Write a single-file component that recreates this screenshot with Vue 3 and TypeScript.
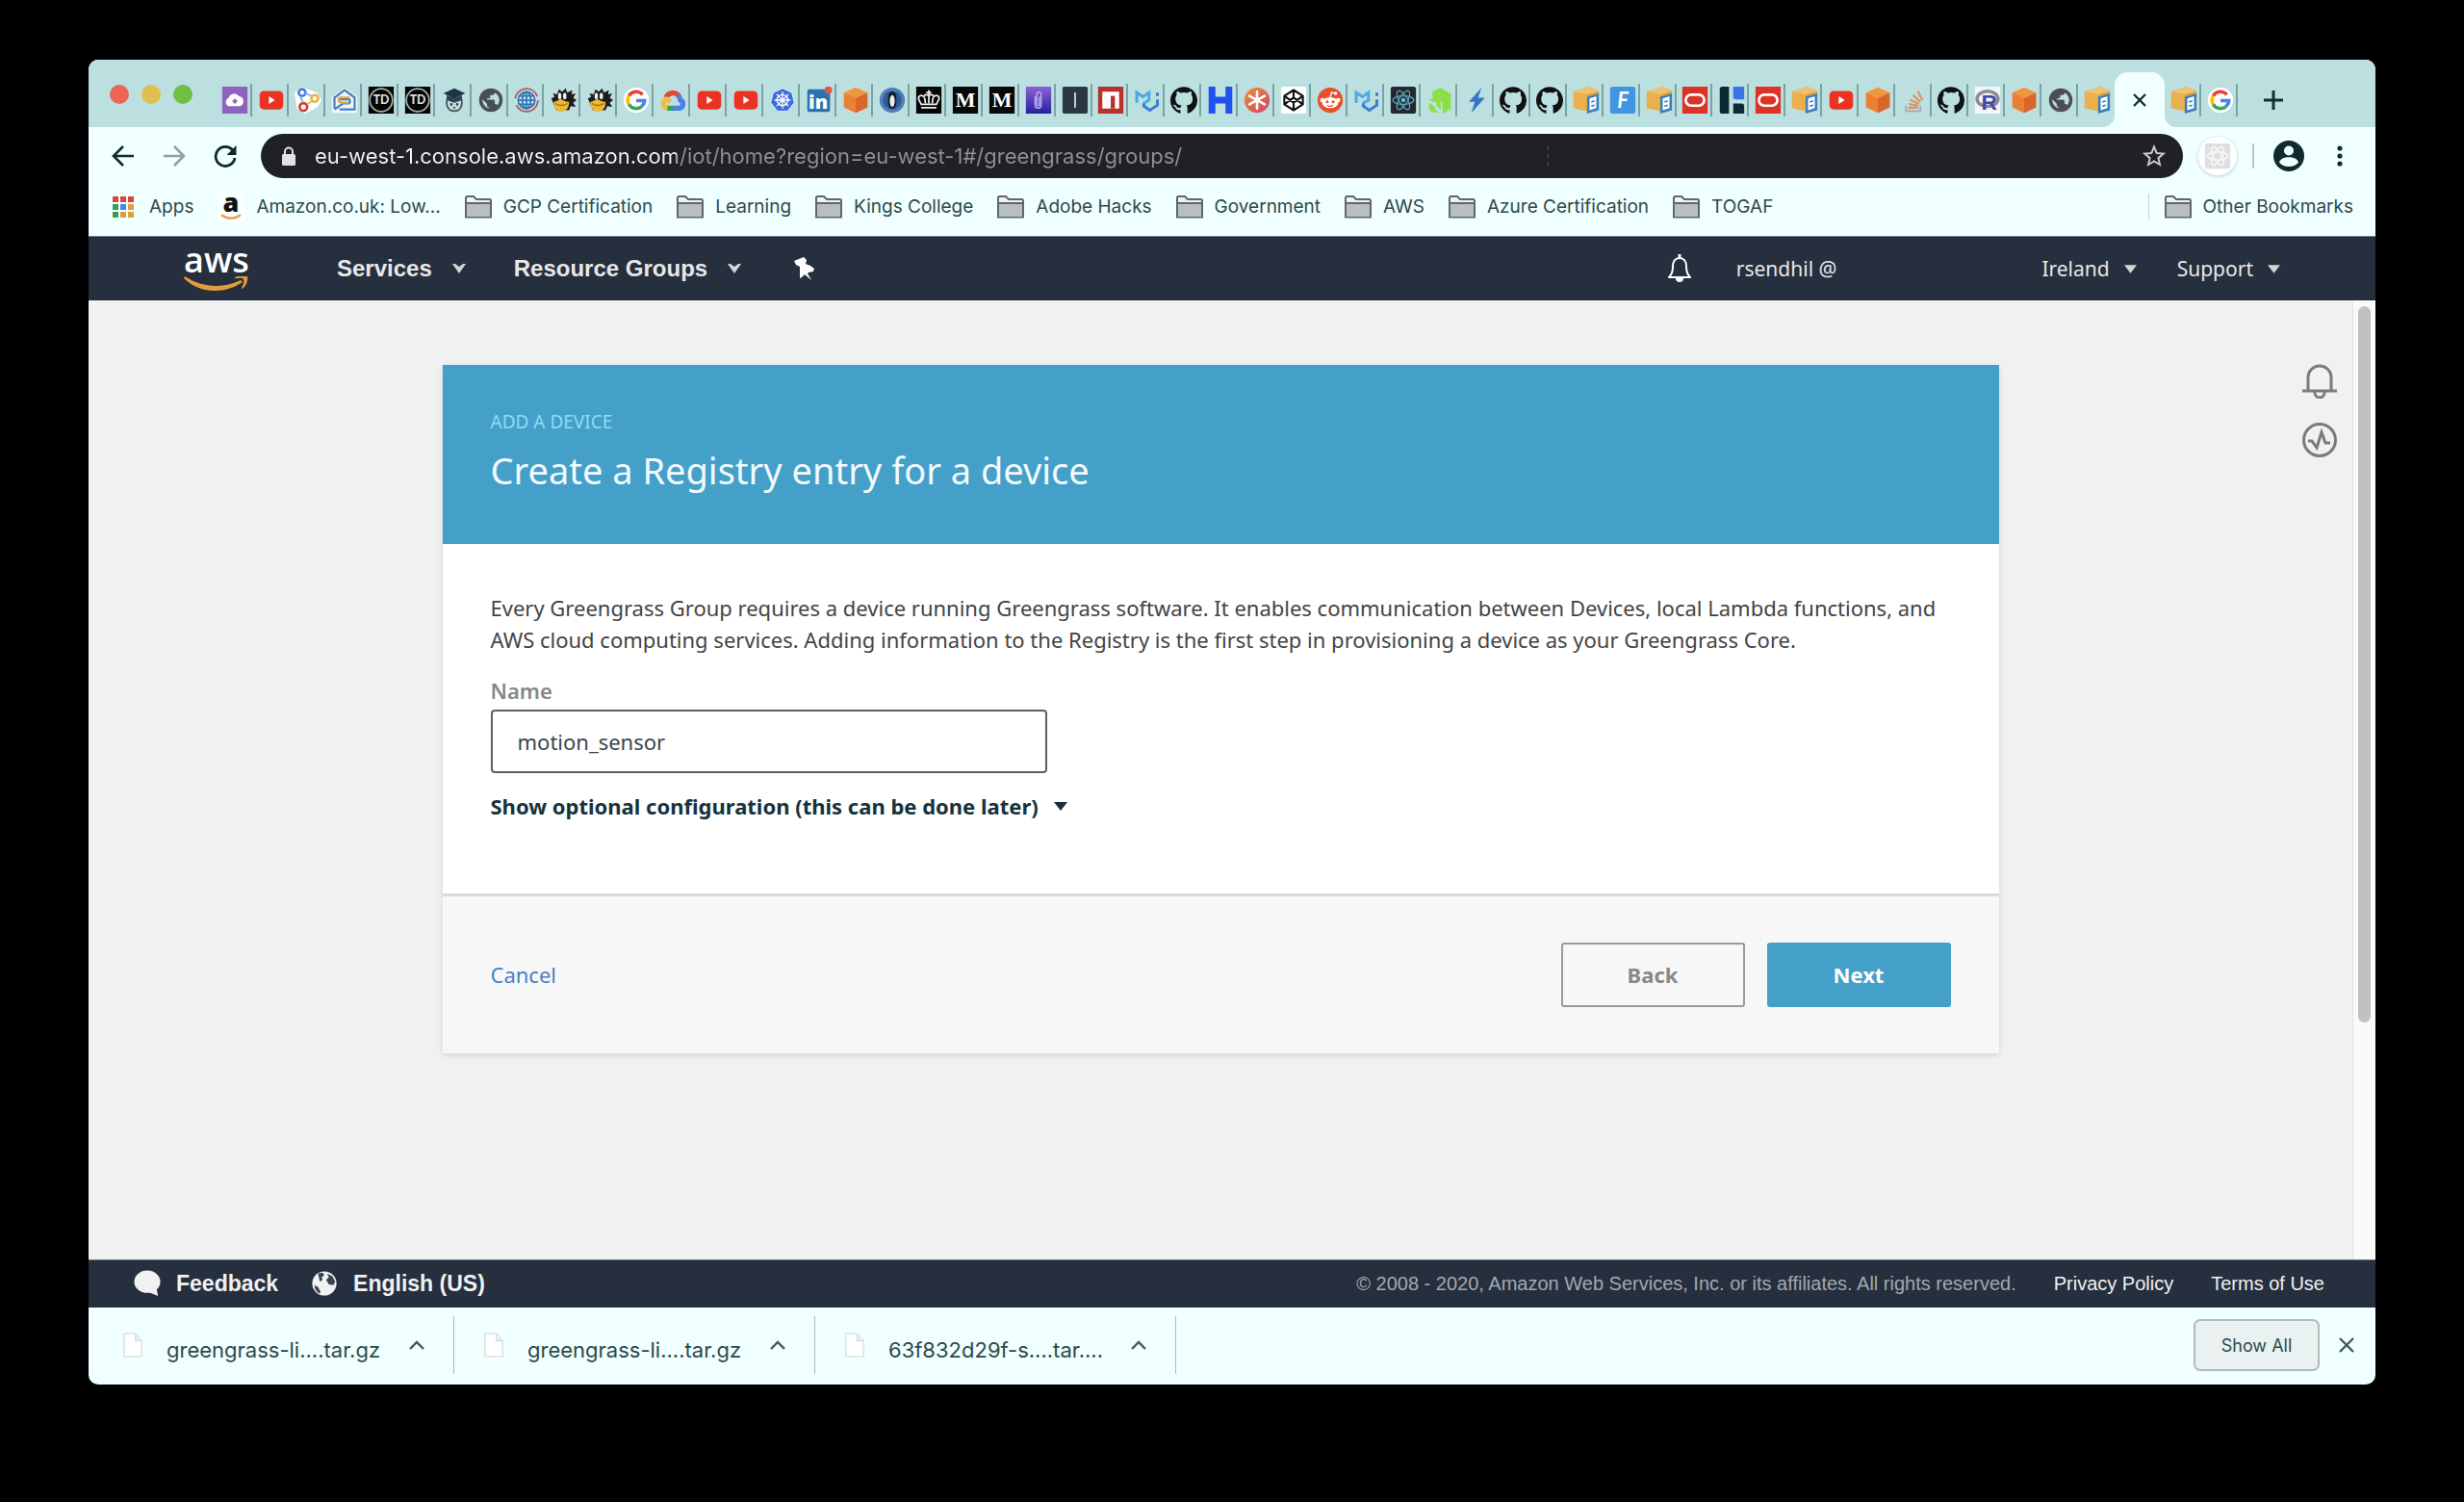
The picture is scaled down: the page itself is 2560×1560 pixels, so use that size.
<script setup lang="ts">
import { ref } from 'vue'

interface Letter {
  text: string
  x: number
  y: number
  size: number
  weight: number
  family: string
  fill: string
  slant?: string
}

const pinnedTabs: string[] = [
  'upload', 'youtube', 'trends', 'mail', 'td', 'td', 'owl', 'globe', 'world', 'duck', 'duck', 'google', 'gcloud',
  'youtube', 'youtube', 'kube', 'linkedin', 'cube', 'penguin', 'crown', 'medium', 'medium', 'clip', 'bar', 'npm',
  'mui', 'github', 'hash', 'aster', 'codepen', 'reddit', 'mui', 'react', 'leaf', 'bolt', 'github', 'github', 'box',
  'font', 'box', 'oracle', 'blocks', 'oracle', 'box', 'youtube', 'cube', 'stack', 'github', 'rlogo', 'cube', 'globe',
  'box',
]
const trailingTabs: string[] = ['box', 'google']

// Favicons that carry a letter draw it over their background shape.
const letters: Record<string, Letter> = {
  td: { text: 'TD', x: 16, y: 21, size: 14, weight: 900, family: 'Lato, sans-serif', fill: '#ddd' },
  linkedin: { text: 'in', x: 15, y: 26, size: 23, weight: 800, family: 'Open Sans, sans-serif', fill: '#fff' },
  medium: { text: 'M', x: 16, y: 24, size: 25, weight: 700, family: 'Liberation Serif, serif', fill: '#fff' },
  font: { text: 'F', x: 16, y: 25, size: 25, weight: 700, family: 'Lato, sans-serif', fill: '#fff', slant: 'italic' },
  rlogo: { text: 'R', x: 18, y: 27, size: 26, weight: 700, family: 'Liberation Sans, sans-serif', fill: '#4448a8' },
}

const bookmarks: string[] = [
  'GCP Certification', 'Learning', 'Kings College', 'Adobe Hacks', 'Government', 'AWS', 'Azure Certification', 'TOGAF',
]

const appColors: string[] = [
  '#db4437', '#db4437', '#db4437', '#3c9a57', '#4285f4', '#dfa03a', '#3c9a57', '#dfa03a', '#dfa03a',
]

const downloads: string[] = ['greengrass-li....tar.gz', 'greengrass-li....tar.gz', '63f832d29f-s....tar....']

const address = ref('eu-west-1.console.aws.amazon.com/iot/home?region=eu-west-1#/greengrass/groups/')
const deviceName = ref('motion_sensor')
</script>

<template>
  <svg class="sprite" aria-hidden="true">
    <defs>
      <linearGradient id="gClip" x1="0" y1="0" x2="0" y2="1">
        <stop offset="0" stop-color="#8a63d2" /><stop offset="1" stop-color="#2420a0" />
      </linearGradient>
      <linearGradient id="gAster" x1="0" y1="0" x2="1" y2="1">
        <stop offset="0" stop-color="#f09030" /><stop offset="1" stop-color="#d04070" />
      </linearGradient>
    </defs>
    <symbol id="upload" viewBox="0 0 32 32">
      <rect x="1" width="30" height="32" fill="#8e63bd" />
      <path d="M9 23a5 5 0 0 1-.5-9.500A7 7 0 0 1 21 11.500 5.500 5.500 0 0 1 26 17a5 5 0 0 1-4 6z" fill="#fff" />
      <path d="M16 14l4 4h-2.500v2h-3v-2H12z" fill="#8e63bd" />
    </symbol>
    <symbol id="youtube" viewBox="0 0 32 32">
      <rect x="2" y="5" width="28" height="22" rx="5" fill="#ec3323" /><path d="M13 11.500v9l7-4.500z" fill="#fff" />
    </symbol>
    <symbol id="trends" viewBox="0 0 32 32">
      <path d="M8 1l18 7 5 8-5 8-14 7-8-5-3-18z" fill="#fff" stroke="#fff" stroke-width="2" stroke-linejoin="round" />
      <g fill="none" stroke-width="3">
        <circle cx="9" cy="7" r="4" stroke="#4a7de0" /><circle cx="24" cy="14" r="4" stroke="#e8b23c" />
        <circle cx="10.500" cy="24" r="4.500" stroke="#d23a35" /><path d="M7 12l3 7" stroke="#8aa" stroke-width="2" />
        <path d="M15 21l6-4" stroke="#e8b23c" stroke-width="2" /><path d="M13 8l7 3" stroke="#8ab4f0" stroke-width="2" />
      </g>
    </symbol>
    <symbol id="mail" viewBox="0 0 32 32">
      <path d="M16 1L1 12v19h30V12z" fill="#fff" opacity=".75" />
      <g fill="none" stroke-width="2.500">
        <path d="M4 26V13L16 4l12 9v14H10" stroke="#3f7fc4" /><path d="M10 15h11c2 0 2 5-1 5h-6L4 27" stroke="#3f7fc4" />
        <path d="M22 13H12c-4 0-4 5 0 6h9" stroke="#e6a23c" />
      </g>
    </symbol>
    <symbol id="td" viewBox="0 0 32 32">
      <rect x="1" width="30" height="32" fill="#050505" /><circle cx="16" cy="16" r="13.500" fill="none" stroke="#aaa" stroke-width="2" />
    </symbol>
    <symbol id="owl" viewBox="0 0 32 32">
      <path d="M8 13c-3 10 1 16 8 16s11-6 8-16z" fill="#c7d9da" stroke="#3c5560" stroke-width="2" />
      <path d="M3 8l13-6 13 6-13 6z" fill="#1d3644" /><path d="M7 10v6l9 3 9-3v-6l-9 4z" fill="#2a4654" />
      <circle cx="12.500" cy="21" r="1.500" fill="#2a4654" /><circle cx="19.500" cy="21" r="1.500" fill="#2a4654" />
      <path d="M14.500 24h3L16 27z" fill="#2a4654" />
    </symbol>
    <symbol id="globe" viewBox="0 0 24 24">
      <path d="M12 2C6.480 2 2 6.480 2 12s4.480 10 10 10 10-4.480 10-10S17.520 2 12 2zm-1 17.930c-3.950-.49-7-3.850-7-7.930 0-.62.08-1.210.21-1.790L9 15v1c0 1.100.9 2 2 2v1.930zm6.900-2.540c-.26-.81-1-1.390-1.900-1.390h-1v-3c0-.55-.45-1-1-1H8v-2h2c.55 0 1-.45 1-1V7h2c1.100 0 2-.9 2-2v-.410c2.930 1.190 5 4.060 5 7.410 0 2.080-.8 3.970-2.100 5.390z" fill="#4a4e54" stroke="#4a4e54" />
    </symbol>
    <symbol id="world" viewBox="0 0 32 32">
      <circle cx="16" cy="16" r="13.500" fill="#cfe3ec" stroke="#b0575f" stroke-width="2" stroke-dasharray="36 8" />
      <g fill="none" stroke="#2f78ae" stroke-width="2">
        <circle cx="16" cy="16" r="10" /><ellipse cx="16" cy="16" rx="5" ry="10" /><path d="M6 16h20M16 6v20M8 11h16M8 21h16" />
      </g>
    </symbol>
    <symbol id="duck" viewBox="0 0 32 32">
      <path d="M2 14l4-2-2-4 5 1 2-6 4 3 4-4 2 5 6-3-1 5 5-1-3 5 4 3-4 3 3 5-6-1-2 5H8z" fill="#1c1c1c" />
      <ellipse cx="12" cy="11" rx="2" ry="4" fill="#eee" /><ellipse cx="18" cy="11" rx="2" ry="4" fill="#eee" />
      <path d="M5 18c4 0 6-4 9-3s5 3 9 3c1 6-4 12-9 12s-10-6-9-12z" fill="#e9b931" /><path d="M7 20c4 3 10 3 14 0" stroke="#a06a10" fill="none" stroke-width="1.500" />
    </symbol>
    <symbol id="google" viewBox="0 0 32 32">
      <circle cx="16" cy="16" r="15" fill="#fff" />
      <g fill="none" stroke-width="4">
        <path d="M23.500 9.500A10 10 0 0 0 7.300 11" stroke="#ea4335" /><path d="M7.300 11a10 10 0 0 0 0 10" stroke="#fbbc05" />
        <path d="M7.300 21a10 10 0 0 0 15.200 2.500" stroke="#34a853" /><path d="M22.500 23.500A10 10 0 0 0 26 16.500H16" stroke="#4285f4" />
      </g>
    </symbol>
    <symbol id="gcloud" viewBox="0 0 32 32">
      <g fill="none" stroke-width="6">
        <path d="M8 13A9 9 0 0 1 23 10.500" stroke="#dc4a3e" /><path d="M22.500 10c2 2 2 4 2.500 6a5 5 0 0 1-1 9.500h-8" stroke="#4a80e8" />
        <path d="M16 25.500H9" stroke="#3aa35a" /><path d="M9.500 25.500C3 24 4 16 9 15l4 3" stroke="#efbf3e" />
      </g>
    </symbol>
    <symbol id="kube" viewBox="0 0 32 32">
      <path d="M16 2l11 5 3 12-8 10H10L2 19 5 7z" fill="#3d6cde" stroke="#e8f0ff" />
      <g fill="none" stroke="#fff" stroke-width="1.500">
        <circle cx="16" cy="16" r="6.500" /><path d="M16 6v20M6.500 16h19M9 9l14 14M23 9L9 23" />
      </g>
    </symbol>
    <symbol id="linkedin" viewBox="0 0 32 32">
      <rect x="2" y="3" width="27" height="27" rx="2" fill="#2a72ae" />
      <circle cx="27" cy="4" r="4.500" fill="#e0574c" />
    </symbol>
    <symbol id="cube" viewBox="0 0 32 32">
      <path d="M16 1l14 6.500v17L16 31 2 24.500v-17z" fill="#ea7f35" /><path d="M16 1l14 6.500L16 14 2 7.500z" fill="#f0963f" />
      <path d="M16 14L30 7.500v17L16 31z" fill="#d9662b" />
    </symbol>
    <symbol id="penguin" viewBox="0 0 32 32">
      <circle cx="16" cy="16" r="15" fill="#4f7dba" /><circle cx="16" cy="16" r="11" fill="#2f5a94" />
      <path d="M16 6c5 0 5 7 5 11s-1 9-5 9-5-5-5-9 0-11 5-11z" fill="#111b2c" /><ellipse cx="16" cy="17" rx="3" ry="7" fill="#e8ecef" />
    </symbol>
    <symbol id="crown" viewBox="0 0 32 32">
      <rect x="1" width="30" height="32" fill="#050505" />
      <path d="M7 21l-3-6c-1-4 3-6 6-3 1-3 4-3 6-1 2-2 5-2 6 1 3-3 7-1 6 3l-3 6z" fill="none" stroke="#eee" stroke-width="2" />
      <path d="M7 25h18M16 11v9M11 13l1 7M21 13l-1 7" stroke="#eee" stroke-width="2" /><path d="M16 4v6M13 7h6" stroke="#eee" stroke-width="2" />
    </symbol>
    <symbol id="medium" viewBox="0 0 32 32">
      <rect x="1" width="30" height="32" fill="#080808" />
    </symbol>
    <symbol id="clip" viewBox="0 0 32 32">
      <rect x="1" width="30" height="32" fill="url(#gClip)" />
      <path d="M12 11v11a3.500 3.500 0 0 0 7 0V9a2.500 2.500 0 0 0-5 0v12a1.500 1.500 0 0 0 3 0v-9" fill="none" stroke="#b9a7ea" stroke-width="1.800" />
    </symbol>
    <symbol id="bar" viewBox="0 0 32 32">
      <rect x="1" width="30" height="32" rx="2" fill="#283941" /><rect x="15" y="7" width="2" height="18" fill="#dde" />
    </symbol>
    <symbol id="npm" viewBox="0 0 32 32">
      <rect x="1" width="30" height="32" fill="#b8312a" /><rect x="6" y="6" width="20" height="20" fill="#fff" /><rect x="16" y="11" width="5" height="15" fill="#b8312a" />
    </symbol>
    <symbol id="mui" viewBox="0 0 32 32">
      <g fill="none" stroke-width="3.500">
        <path d="M3.500 19V7l7.500 5 7-5v9l-7 4" stroke="#4fa9e6" /><path d="M12 20v3l7 5 9-6v-7M28 11V7" stroke="#3a80cf" />
      </g>
    </symbol>
    <symbol id="github" viewBox="0 0 16 16">
      <path d="M8 .2C3.600.2 0 3.800 0 8.200c0 3.500 2.300 6.500 5.500 7.600.4.100.5-.2.500-.4v-1.500c-2 .4-2.700-.9-2.900-1.300-.1-.3-.6-1-1-1.200-.3-.2-.8-.7 0-.7s1.200.6 1.400.9c.8 1.400 2.100 1 2.600.8.100-.6.300-1 .6-1.200-1.800-.2-3.700-.9-3.700-4 0-.9.300-1.600.8-2.200-.1-.2-.4-1 .1-2.100 0 0 .7-.2 2.200.8a7.600 7.600 0 0 1 4 0c1.500-1 2.200-.8 2.200-.8.500 1.100.2 1.900.1 2.100.5.600.8 1.300.8 2.200 0 3.100-1.900 3.800-3.700 4 .3.300.6.800.6 1.500v2.700c0 .2.100.5.500.4A8 8 0 0 0 16 8.200C16 3.800 12.400.2 8 .2z" fill="#111" />
    </symbol>
    <symbol id="hash" viewBox="0 0 32 32">
      <path d="M6 0v32M26 0v32M6 16h20" stroke="#1f52f0" stroke-width="8" fill="none" />
    </symbol>
    <symbol id="aster" viewBox="0 0 32 32">
      <circle cx="16" cy="16" r="15" fill="url(#gAster)" />
      <path d="M16 6v20M7 11l18 10M25 11L7 21" stroke="#fff" stroke-width="3" stroke-linecap="round" />
    </symbol>
    <symbol id="codepen" viewBox="0 0 32 32">
      <rect x="1" width="30" height="32" rx="2" fill="#fff" />
      <path d="M16 4l11 7v10l-11 7-11-7V11zM5 11l11 8 11-8M5 21l11-8 11 8M16 4v9M16 19v9" fill="none" stroke="#111" stroke-width="2.400" stroke-linejoin="round" />
    </symbol>
    <symbol id="reddit" viewBox="0 0 32 32">
      <circle cx="16" cy="16" r="15" fill="#e8502a" /><ellipse cx="16" cy="19" rx="9.500" ry="6.500" fill="#fff" />
      <circle cx="6.500" cy="16" r="2.500" fill="#fff" /><circle cx="25.500" cy="16" r="2.500" fill="#fff" />
      <path d="M16 13l1.500-6 5 1" fill="none" stroke="#fff" stroke-width="1.500" /><circle cx="22.500" cy="8" r="2" fill="#fff" />
      <circle cx="12.500" cy="18" r="1.800" fill="#e8502a" /><circle cx="19.500" cy="18" r="1.800" fill="#e8502a" /><path d="M12.500 22c2 1.500 5 1.500 7 0" stroke="#e8502a" fill="none" stroke-width="1.300" />
    </symbol>
    <symbol id="react" viewBox="0 0 32 32">
      <rect x="1" width="30" height="32" rx="3" fill="#23282e" />
      <g fill="none" stroke="#5b9fb4" stroke-width="1.500">
        <ellipse cx="16" cy="16" rx="12.500" ry="5" /><ellipse cx="16" cy="16" rx="12.500" ry="5" transform="rotate(60 16 16)" />
        <ellipse cx="16" cy="16" rx="12.500" ry="5" transform="rotate(120 16 16)" />
      </g>
      <circle cx="16" cy="16" r="2.500" fill="#6bbdd4" />
    </symbol>
    <symbol id="leaf" viewBox="0 0 32 32">
      <path d="M7 6l9-5 13 7v18l-8 5h-2V18L7 11zM3 16l6-4 8 5v10l-5-4v-4z" fill="#8be04a" /><path d="M3 19l7 5v3l5 3-6 1-6-4z" fill="#8be04a" />
    </symbol>
    <symbol id="bolt" viewBox="0 0 32 32"><path d="M22 1L7 18h7l-4 13 16-18h-8z" fill="#3578c6" /></symbol>
    <symbol id="box" viewBox="0 0 32 32">
      <path d="M1 6L19 0l12 5v6L17 14v15L1 25z" fill="#e0a43f" /><path d="M1 6l16 3v20L1 25z" fill="#eab04e" /><path d="M1 6L19 0l12 5-14 4z" fill="#f0c170" />
      <path d="M17 12l14-4v20l-14 4z" fill="#3b7fc0" /><path d="M20 14l8-2.500v14L20 28z" fill="#fff" />
      <path d="M22 17l4-1v2l-4 1zM22 22l4-1v2l-4 1z" fill="#3b7fc0" />
    </symbol>
    <symbol id="font" viewBox="0 0 32 32">
      <rect x="1" width="30" height="32" rx="3" fill="#4295e4" />
    </symbol>
    <symbol id="oracle" viewBox="0 0 32 32">
      <rect x="1" width="30" height="32" fill="#dd3326" /><rect x="5" y="9.500" width="22" height="13" rx="6.500" fill="none" stroke="#fff" stroke-width="3" />
    </symbol>
    <symbol id="blocks" viewBox="0 0 32 32">
      <path d="M2 3q0-3 3-3h8v32H5q-3 0-3-3z" fill="#0c2a35" /><path d="M18 0h13v15H21q-3 0-3-3z" fill="#3b73e8" /><path d="M18 20h10q3 0 3 3v9H18z" fill="#0c2a35" />
    </symbol>
    <symbol id="stack" viewBox="0 0 32 32">
      <path d="M6 22v7h17v-7" fill="none" stroke="#a5acac" stroke-width="2" />
      <path d="M9 25h11M9.500 20.500l11 2M11 15.500l10.500 5M14.500 10l8.500 8M20 5l5.500 11" stroke="#df8f54" stroke-width="2.300" />
    </symbol>
    <symbol id="rlogo" viewBox="0 0 32 32">
      <rect x="1" width="30" height="32" fill="#f4f5f8" /><ellipse cx="16" cy="14.500" rx="12.500" ry="9" fill="none" stroke="#8b8d94" stroke-width="4" />
    </symbol>
    <symbol id="folder" viewBox="0 0 28 24">
      <path d="M1 22.500V2.500Q1 1 2.500 1H9l3 3h13.500Q27 4 27 5.500v17z" fill="#eef4f4" stroke="#616666" stroke-width="2" />
      <path d="M2 8.500h24V22H2z" fill="#b7bfbf" /><path d="M1 8h26" stroke="#616666" stroke-width="2" />
    </symbol>
    <symbol id="caret" viewBox="0 0 14 9"><path d="M0 0h14L7 9z" fill="currentColor" /></symbol>
    <symbol id="notch" viewBox="0 0 14 10"><path d="M0 0l3 0 4 3 4-3 3 0-7 10z" fill="currentColor" /></symbol>
    <symbol id="file" viewBox="0 0 22 28">
      <path d="M1 1h13l7 8v18H1z" fill="#fff" stroke="#d9dede" stroke-width="1.500" /><path d="M14 1v8h7" fill="#eee" stroke="#d9dede" stroke-width="1.500" />
    </symbol>
  </svg>

  <div class="desktop">
    <div class="window">
      <header class="strip">
        <div class="lights"><i class="red" /><i class="amber" /><i class="green" /></div>
        <nav class="tabs" aria-label="Tabs">
          <button v-for="(icon, i) in pinnedTabs" :key="i" class="tab" :class="{ last: i === pinnedTabs.length - 1 }" :aria-label="icon">
            <svg viewBox="0 0 32 32">
              <use :href="'#' + icon" width="32" height="32" />
              <text
                v-if="letters[icon]" :x="letters[icon].x" :y="letters[icon].y" :font-size="letters[icon].size"
                :font-weight="letters[icon].weight" :font-family="letters[icon].family" :font-style="letters[icon].slant"
                :fill="letters[icon].fill" text-anchor="middle"
              >{{ letters[icon].text }}</text>
            </svg>
          </button>
          <button class="tab active" aria-label="Close tab">
            <svg viewBox="0 0 14 14"><path d="M1 1l12 12M13 1L1 13" stroke="#14302f" stroke-width="2.400" /></svg>
          </button>
          <button v-for="(icon, i) in trailingTabs" :key="'t' + i" class="tab" :aria-label="icon">
            <svg><use :href="'#' + icon" /></svg>
          </button>
        </nav>
        <button class="plus" aria-label="New tab">
          <svg viewBox="0 0 20 20"><path d="M10 0v20M0 10h20" stroke="#14302f" stroke-width="3" /></svg>
        </button>
      </header>

      <div class="toolbar">
        <div class="navs">
          <button aria-label="Back"><svg viewBox="0 0 24 24"><path d="M23 12H3M12 2L2 12l10 10" fill="none" stroke="#0f2c2b" stroke-width="2.600" /></svg></button>
          <button aria-label="Forward"><svg viewBox="0 0 24 24"><path d="M1 12h20M12 2l10 10-10 10" fill="none" stroke="#8fa3a3" stroke-width="2.600" /></svg></button>
          <button aria-label="Reload">
            <svg viewBox="0 0 24 24"><path d="M20.500 7A10 10 0 1 0 22 14" fill="none" stroke="#0f2c2b" stroke-width="2.800" /><path d="M23.500 1v10h-10z" fill="#0f2c2b" /></svg>
          </button>
        </div>
        <div class="omnibox">
          <svg class="lock" viewBox="0 0 14 20"><rect y="8" width="14" height="12" rx="1.500" fill="#dfe1e3" /><path d="M3 9V5.500a4 4 0 0 1 8 0V9" fill="none" stroke="#dfe1e3" stroke-width="2" /></svg>
          <input v-model="address" class="url" type="text" aria-label="Address" spellcheck="false" />
          <svg class="star" viewBox="0 0 24 24"><path d="M12 2.500l2.700 6.500 7 .6-5.300 4.600 1.600 6.800-6-3.600-6 3.600 1.600-6.800L2.300 9.600l7-.6z" fill="none" stroke="#c6c8ca" stroke-width="2" /></svg>
        </div>
        <span class="extension">
          <svg viewBox="0 0 32 32"><rect x="1" y="1" width="30" height="30" rx="2" fill="#dfdfdf" /><g fill="none" stroke="#f6f6f6" stroke-width="1.800"><ellipse cx="16" cy="16" rx="12" ry="5" /><ellipse cx="16" cy="16" rx="12" ry="5" transform="rotate(60 16 16)" /><ellipse cx="16" cy="16" rx="12" ry="5" transform="rotate(120 16 16)" /></g></svg>
        </span>
        <span class="divider" />
        <svg class="avatar" viewBox="0 0 32 32"><circle cx="16" cy="16" r="16" fill="#0f2b2b" /><circle cx="16" cy="10.500" r="5" fill="#f0ffff" /><path d="M6 22.500c2-7 18-7 20 0-4 6-16 6-20 0z" fill="#f0ffff" /></svg>
        <svg class="kebab" viewBox="0 0 6 22"><circle cx="3" cy="3" r="2.600" /><circle cx="3" cy="11" r="2.600" /><circle cx="3" cy="19" r="2.600" /></svg>
      </div>

      <nav class="bookmarks" aria-label="Bookmarks">
        <a href="#" class="apps"><span class="grid"><i v-for="(c, i) in appColors" :key="i" :style="{ background: c }" /></span>Apps</a>
        <a href="#" class="amazon">
          <svg viewBox="0 0 28 30"><rect width="28" height="30" fill="#fff" opacity=".6" /><text x="14" y="20" text-anchor="middle" font-family="Open Sans, sans-serif" font-weight="800" font-size="27" fill="#111">a</text><path d="M4 23c6 5 14 5 20 0" fill="none" stroke="#eea04a" stroke-width="2.500" /></svg>
          Amazon.co.uk: Low...
        </a>
        <a v-for="b in bookmarks" :key="b" href="#"><svg class="folder"><use href="#folder" /></svg>{{ b }}</a>
        <span class="grow" />
        <a href="#" class="other"><svg class="folder"><use href="#folder" /></svg>Other Bookmarks</a>
      </nav>

      <nav class="console" aria-label="Console">
        <a href="#" class="logo" aria-label="aws">
          <span>aws</span>
          <svg viewBox="0 0 68 16"><path d="M1 0c18 12 40 13 58 4l2 2C42 19 16 18 0 2z" fill="#e79a3c" /><path d="M53 1c5-2 10-2 13-1 1 4-1 9-5 13l-1-1c2-4 3-7 2-9s-6-1-9-1z" fill="#e79a3c" /></svg>
        </a>
        <button class="menu bold services">Services<svg><use href="#notch" /></svg></button>
        <button class="menu bold">Resource Groups<svg><use href="#notch" /></svg></button>
        <svg class="pin" viewBox="0 0 22 24"><path d="M10 0l3 3-1 4 5 2 4 3-1 3-5 1-1 1 4 7-7-6-3 3-2 1V10L2 8 0 4z" fill="#fff" /></svg>
        <span class="grow" />
        <svg class="alert" viewBox="0 0 26 30"><path d="M2 24c3-3 4-6 4-11 0-6 3-9 7-9s7 3 7 9c0 5 1 8 4 11z" fill="none" stroke="#fff" stroke-width="2" stroke-linejoin="round" /><path d="M13 0v4" stroke="#fff" stroke-width="3" /><path d="M9 25h8a4 4 0 0 1-8 0z" fill="#fff" /></svg>
        <a href="#" class="account">rsendhil @</a>
        <button class="menu">Ireland<svg><use href="#caret" /></svg></button>
        <button class="menu support">Support<svg><use href="#caret" /></svg></button>
      </nav>

      <main class="page">
        <form class="card" @submit.prevent>
          <header class="head">
            <p class="eyebrow">ADD A DEVICE</p>
            <h1>Create a Registry entry for a device</h1>
          </header>
          <section class="body">
            <p>Every Greengrass Group requires a device running Greengrass software. It enables communication between Devices, local Lambda functions, and AWS cloud computing services. Adding information to the Registry is the first step in provisioning a device as your Greengrass Core.</p>
            <label for="device-name">Name</label>
            <input id="device-name" v-model="deviceName" type="text" />
            <button type="button" class="optional">Show optional configuration (this can be done later)<svg><use href="#caret" /></svg></button>
          </section>
          <footer class="actions">
            <a href="#">Cancel</a>
            <span class="grow" />
            <button type="button" class="btn">Back</button>
            <button type="submit" class="btn primary">Next</button>
          </footer>
        </form>
        <aside class="side">
          <svg viewBox="0 0 36 36"><path d="M0 28h36M6 28V14a12 12 0 0 1 24 0v14M13 28v2a5 5 0 0 0 10 0v-2" fill="none" stroke="#7b7b7b" stroke-width="3" /></svg>
          <svg viewBox="0 0 36 36"><circle cx="18" cy="18" r="16.500" fill="none" stroke="#7b7b7b" stroke-width="3" /><path d="M6 19h4l5 7 5-16 4 11h5" fill="none" stroke="#7b7b7b" stroke-width="3" /></svg>
        </aside>
        <div class="track"><div class="thumb" /></div>
      </main>

      <footer class="legal">
        <a href="#" class="strong"><svg viewBox="0 0 30 30"><ellipse cx="15" cy="13" rx="14.500" ry="12.500" fill="#f1f1f1" /><path d="M15 24l12 5-2-10z" fill="#f1f1f1" /></svg>Feedback</a>
        <a href="#" class="strong"><svg viewBox="0 0 30 30"><circle cx="15" cy="15" r="13.500" fill="#f1f1f1" /><path d="M8 4l5-1 2 3-3 2 1 3-3 2zM18 4l6 3 3 6-2 4-5-1-3-5 3-3zM4 17l4 2 3 6-2 1c-3-2-5-5-5-9z" fill="#3a4350" /></svg>English (US)</a>
        <span class="grow" />
        <span class="copy">© 2008 - 2020, Amazon Web Services, Inc. or its affiliates. All rights reserved.</span>
        <a href="#">Privacy Policy</a>
        <a href="#">Terms of Use</a>
      </footer>

      <div class="shelf">
        <button v-for="(d, i) in downloads" :key="i" class="download">
          <svg class="file"><use href="#file" /></svg>
          <span>{{ d }}</span>
          <svg class="up" viewBox="0 0 16 10"><path d="M1 9l7-7 7 7" fill="none" stroke="#3f5a5a" stroke-width="2.400" /></svg>
        </button>
        <span class="grow" />
        <button class="show">Show All</button>
        <button class="close" aria-label="Close"><svg viewBox="0 0 16 16"><path d="M1 1l14 14M15 1L1 15" stroke="#3f5a5a" stroke-width="2.400" /></svg></button>
      </div>
    </div>
  </div>
</template>

<style>
body { background: #000; }
</style>

<style scoped>
* { box-sizing: border-box; }
button { background: none; border: 0; padding: 0; margin: 0; color: inherit; font: inherit; text-align: left; }
a { color: inherit; text-decoration: none; }
p, h1 { margin: 0; font-weight: 400; }
svg { display: block; flex: none; }
.sprite { position: absolute; width: 0; height: 0; }
.grow { flex: 1; }

.desktop { min-height: 100vh; padding: 62px 92px 122px; background: #000; display: flex; }
.window { flex: 1; min-width: 0; display: flex; flex-direction: column; border-radius: 10px; overflow: hidden; background: #f0ffff; font-family: Inter, sans-serif; }

.strip { height: 70px; background: #bcdfdf; display: flex; align-items: flex-end; flex: none; }
.lights { width: 132px; padding: 0 0 24px 22px; display: flex; gap: 13px; }
.lights i { width: 20px; height: 20px; border-radius: 50%; }
.red { background: #ed6559; }
.amber { background: #e1bf4e; }
.green { background: #72be45; }
.tabs { flex: 1; min-width: 0; display: flex; }
.tab { flex: 1 1 0; min-width: 0; height: 57px; padding-left: 2px; display: flex; align-items: center; justify-content: center; position: relative; }
.tab svg { width: 28px; height: 28px; }
.tab::after { content: ''; position: absolute; right: 0; top: 12px; width: 2px; height: 34px; background: #7ba3a3; }
.tab.last::after { display: none; }
.tab.active { flex: 0 0 52px; padding: 0; background: #f0ffff; border-radius: 14px 14px 0 0; }
.tab.active svg { width: 14px; height: 16px; }
.tab.active::before, .tab.active::after { content: ''; display: block; position: absolute; top: auto; bottom: 0; width: 12px; height: 12px; }
.tab.active::before { left: -12px; background: radial-gradient(circle at 0 0, transparent 12px, #f0ffff 12px); }
.tab.active::after { right: -12px; background: radial-gradient(circle at 100% 0, transparent 12px, #f0ffff 12px); }
.plus { width: 143px; height: 57px; padding-left: 27px; display: flex; align-items: center; }
.plus svg { width: 20px; height: 20px; }

.toolbar { flex: none; height: 59px; display: flex; align-items: center; padding: 0 34px 0 24px; }
.navs { display: flex; gap: 29px; }
.navs svg { width: 24px; height: 24px; }
.omnibox { flex: 1; min-width: 0; height: 46px; margin-left: 25px; border-radius: 23px; padding: 0 18px 0 22px; display: flex; align-items: center; gap: 20px; background: repeating-linear-gradient(#55585c 0 4px, transparent 4px 8px) 67% 50% / 1px 20px no-repeat, #202124; }
.lock { width: 14px; height: 20px; }
.url { flex: 1; min-width: 0; border: 0; outline: 0; padding: 0; height: 32px; font: 22px Inter, sans-serif; color: transparent; background: linear-gradient(90deg, #f1f3f4 376px, #8f9195 376px); -webkit-background-clip: text; background-clip: text; }
.star { width: 24px; height: 24px; }
.extension { width: 40px; height: 40px; margin-left: 16px; border-radius: 50%; background: #fff; box-shadow: 0 1px 4px #00000033; display: flex; align-items: center; justify-content: center; }
.extension svg { width: 28px; height: 28px; }
.divider { width: 2px; height: 26px; margin: 0 20px 0 16px; background: #b9c9c9; }
.avatar { width: 32px; height: 32px; }
.kebab { width: 6px; height: 22px; margin-left: 34px; fill: #0f2c2b; }

.bookmarks { flex: none; height: 54px; padding: 0 23px 6px 25px; display: flex; align-items: center; gap: 25px; font-size: 19px; line-height: 28px; color: #2d4a49; white-space: nowrap; }
.bookmarks a { display: flex; align-items: center; gap: 12px; }
.bookmarks .apps { gap: 16px; }
.bookmarks .amazon svg { width: 28px; height: 30px; }
.grid { display: grid; grid-template-columns: repeat(3, 6px); gap: 2px; }
.grid i { height: 6px; }
.folder { width: 28px; height: 24px; }
.bookmarks .other { border-left: 1px solid #c2d2d2; padding-left: 16px; }

.console { flex: none; height: 67px; padding: 0 99px; display: flex; align-items: center; background: #252f3e; border-top: 1px solid #74808a; color: #e8e8e8; font: 21px/28px "Noto Sans", sans-serif; white-space: nowrap; }
.logo { width: 68px; display: flex; flex-direction: column; align-items: center; margin-right: 91px; }
.logo span { font: 600 36px/28px "Open Sans", sans-serif; height: 31px; color: #fff; }
.logo svg { width: 68px; height: 16px; }
.menu { display: flex; align-items: center; gap: 15px; }
.menu svg { width: 13px; height: 9px; color: #d5d5d5; }
.menu.bold { gap: 21px; font: 700 24px/28px "Liberation Sans", sans-serif; }
.menu.bold svg { width: 14px; height: 10px; }
.services { margin-right: 50px; }
.pin { width: 22px; height: 24px; margin-left: 55px; }
.alert { width: 26px; height: 30px; margin-right: 46px; }
.account { margin-right: 213px; }
.support { margin-left: 42px; }

.page { flex: 1; position: relative; background: #f1f1f1; padding: 67px 24px 67px 0; font-family: "Noto Sans", sans-serif; }
.card { width: 69%; max-width: 1617px; margin: 0 auto; box-shadow: 0 2px 6px #0000001f; background: #fff; }
.head { background: #44a0c8; height: 186px; padding: 45px 50px 0; }
.eyebrow { font-size: 19px; line-height: 28px; color: #8fdcf5; }
h1 { font-size: 38px; line-height: 52px; margin-top: 10px; color: #f2fafd; }
.body { height: 363px; padding: 50px 48px 0 50px; display: flex; flex-direction: column; align-items: flex-start; color: #444; font-size: 22px; line-height: 33px; }
.body label { margin-top: 20px; font-weight: 600; color: #888; }
.body input { width: 578px; height: 66px; margin-top: 3px; border: 2px solid #546469; border-radius: 4px; padding: 0 26px; font: 22px "Noto Sans", sans-serif; color: #37474f; background: #fff; }
.optional { margin-top: 18px; display: flex; align-items: center; gap: 16px; font-weight: 700; color: #16323d; }
.optional svg { width: 14px; height: 9px; }
.actions { height: 166px; border-top: 3px solid #d9d9d9; background: #f7f7f7; padding: 0 50px; display: flex; align-items: center; gap: 23px; font-size: 22px; line-height: 33px; }
.actions a { color: #4a7fc4; }
.btn { width: 191px; height: 67px; border: 2px solid #999; border-radius: 3px; text-align: center; font-weight: 700; color: #888; }
.primary { background: #44a0c8; border-color: #44a0c8; color: #fff; }
.side { position: absolute; right: 40px; top: 66px; display: flex; flex-direction: column; gap: 25px; }
.side svg { width: 36px; height: 36px; }
.track { position: absolute; inset: 0 0 0 auto; width: 24px; background: #fafafa; border-left: 1px solid #e4e4e4; padding: 6px 5px; }
.thumb { height: 75.6%; border-radius: 7px; background: #c1c1c1; }

.legal { flex: none; height: 50px; background: #252f3e; border-top: 1px solid #74808a; padding: 0 53px 2px 47px; display: flex; align-items: center; gap: 39px; font: 20px/28px "Liberation Sans", sans-serif; color: #f1f1f1; white-space: nowrap; }
.legal svg { width: 28px; height: 28px; }
.strong { display: flex; align-items: center; gap: 16px; font-weight: 700; font-size: 23px; }
.legal .strong + .strong { margin-left: -5px; }
.copy { color: #a3a8ad; }

.shelf { flex: none; height: 80px; display: flex; align-items: center; padding: 0 22px 2px 5px; color: #2d4a49; white-space: nowrap; }
.download { width: 375px; height: 60px; padding: 0 30px 0 31px; border-right: 1px solid #a9bcbc; display: flex; align-items: center; font-size: 22px; line-height: 30px; }
.download span { flex: 1; padding-top: 10px; }
.file { width: 20px; height: 26px; margin-right: 25px; }
.up { width: 16px; height: 10px; }
.show { width: 131px; height: 54px; border: 2px solid #b0bcbc; border-radius: 7px; background: #e9f1f1; text-align: center; font-size: 18px; }
.close { margin-left: 20px; }
.close svg { width: 16px; height: 16px; }
</style>
